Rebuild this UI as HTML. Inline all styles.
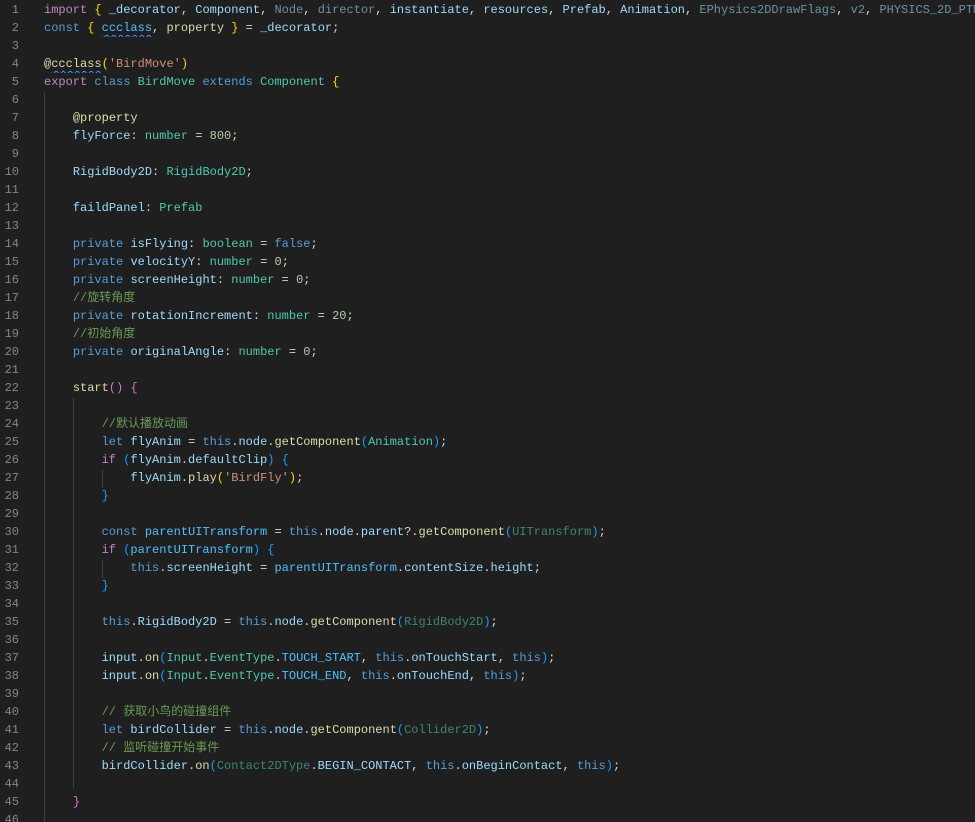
<!DOCTYPE html>
<html><head><meta charset="utf-8"><style>
html,body{margin:0;padding:0;background:#1f1f1f;width:975px;height:822px;overflow:hidden}
.ed{position:relative;width:975px;height:822px;overflow:hidden;font-family:"Liberation Mono","Noto Sans CJK SC",monospace;font-size:12px;line-height:18px;color:#d4d4d4;padding-top:1px;box-sizing:border-box}
.l{position:relative;height:18px;white-space:pre;overflow:hidden}
.n{position:absolute;left:0;width:19px;text-align:right;color:#858585}
.c{position:absolute;left:44px}
.g{position:absolute;width:1px;background:#404040}
.k{color:#c586c0}.b{color:#569cd6}.v{color:#9cdcfe}.t{color:#4ec9b0}.f{color:#dcdcaa}.s{color:#ce9178}.num{color:#b5cea8}.cm{color:#6a9955}.cn{color:#4fc1ff}
.y{color:#ffd700}.p{color:#da70d6}.bl{color:#179fff}.d{opacity:.6}
.sq{text-decoration:underline wavy #3794ff;text-decoration-thickness:1px;text-underline-offset:3px}
</style></head><body><div class="ed">
<div class="g" style="left:44px;top:92px;height:730px"></div>
<div class="g" style="left:73px;top:398px;height:390px"></div>
<div class="g" style="left:102px;top:470px;height:18px"></div>
<div class="g" style="left:102px;top:560px;height:18px"></div>
<div class="l"><span class="n">1</span><span class="c"><span class="k">import</span> <span class="y">{</span> <span class="v">_decorator</span>, <span class="v">Component</span>, <span class="v d">Node</span>, <span class="v d">director</span>, <span class="v">instantiate</span>, <span class="v">resources</span>, <span class="v">Prefab</span>, <span class="v">Animation</span>, <span class="v d">EPhysics2DDrawFlags</span>, <span class="v d">v2</span>, <span class="v d">PHYSICS_2D_PTM_RATIO</span></span></div>
<div class="l"><span class="n">2</span><span class="c"><span class="b">const</span> <span class="y">{</span> <span class="cn sq">ccclass</span>, <span class="f">property</span> <span class="y">}</span> = <span class="v">_decorator</span>;</span></div>
<div class="l"><span class="n">3</span></div>
<div class="l"><span class="n">4</span><span class="c"><span class="f">@<span class="sq">ccclass</span></span><span class="y">(</span><span class="s">'BirdMove'</span><span class="y">)</span></span></div>
<div class="l"><span class="n">5</span><span class="c"><span class="k">export</span> <span class="b">class</span> <span class="t">BirdMove</span> <span class="b">extends</span> <span class="t">Component</span> <span class="y">{</span></span></div>
<div class="l"><span class="n">6</span></div>
<div class="l"><span class="n">7</span><span class="c">    <span class="f">@property</span></span></div>
<div class="l"><span class="n">8</span><span class="c">    <span class="v">flyForce</span>: <span class="t">number</span> = <span class="num">800</span>;</span></div>
<div class="l"><span class="n">9</span></div>
<div class="l"><span class="n">10</span><span class="c">    <span class="v">RigidBody2D</span>: <span class="t">RigidBody2D</span>;</span></div>
<div class="l"><span class="n">11</span></div>
<div class="l"><span class="n">12</span><span class="c">    <span class="v">faildPanel</span>: <span class="t">Prefab</span></span></div>
<div class="l"><span class="n">13</span></div>
<div class="l"><span class="n">14</span><span class="c">    <span class="b">private</span> <span class="v">isFlying</span>: <span class="t">boolean</span> = <span class="b">false</span>;</span></div>
<div class="l"><span class="n">15</span><span class="c">    <span class="b">private</span> <span class="v">velocityY</span>: <span class="t">number</span> = <span class="num">0</span>;</span></div>
<div class="l"><span class="n">16</span><span class="c">    <span class="b">private</span> <span class="v">screenHeight</span>: <span class="t">number</span> = <span class="num">0</span>;</span></div>
<div class="l"><span class="n">17</span><span class="c">    <span class="cm">//旋转角度</span></span></div>
<div class="l"><span class="n">18</span><span class="c">    <span class="b">private</span> <span class="v">rotationIncrement</span>: <span class="t">number</span> = <span class="num">20</span>;</span></div>
<div class="l"><span class="n">19</span><span class="c">    <span class="cm">//初始角度</span></span></div>
<div class="l"><span class="n">20</span><span class="c">    <span class="b">private</span> <span class="v">originalAngle</span>: <span class="t">number</span> = <span class="num">0</span>;</span></div>
<div class="l"><span class="n">21</span></div>
<div class="l"><span class="n">22</span><span class="c">    <span class="f">start</span><span class="p">()</span> <span class="p">{</span></span></div>
<div class="l"><span class="n">23</span></div>
<div class="l"><span class="n">24</span><span class="c">        <span class="cm">//默认播放动画</span></span></div>
<div class="l"><span class="n">25</span><span class="c">        <span class="b">let</span> <span class="v">flyAnim</span> = <span class="b">this</span>.<span class="v">node</span>.<span class="f">getComponent</span><span class="bl">(</span><span class="t">Animation</span><span class="bl">)</span>;</span></div>
<div class="l"><span class="n">26</span><span class="c">        <span class="k">if</span> <span class="bl">(</span><span class="v">flyAnim</span>.<span class="v">defaultClip</span><span class="bl">)</span> <span class="bl">{</span></span></div>
<div class="l"><span class="n">27</span><span class="c">            <span class="v">flyAnim</span>.<span class="f">play</span><span class="y">(</span><span class="s">'BirdFly'</span><span class="y">)</span>;</span></div>
<div class="l"><span class="n">28</span><span class="c">        <span class="bl">}</span></span></div>
<div class="l"><span class="n">29</span></div>
<div class="l"><span class="n">30</span><span class="c">        <span class="b">const</span> <span class="cn">parentUITransform</span> = <span class="b">this</span>.<span class="v">node</span>.<span class="v">parent</span>?.<span class="f">getComponent</span><span class="bl">(</span><span class="t d">UITransform</span><span class="bl">)</span>;</span></div>
<div class="l"><span class="n">31</span><span class="c">        <span class="k">if</span> <span class="bl">(</span><span class="cn">parentUITransform</span><span class="bl">)</span> <span class="bl">{</span></span></div>
<div class="l"><span class="n">32</span><span class="c">            <span class="b">this</span>.<span class="v">screenHeight</span> = <span class="cn">parentUITransform</span>.<span class="v">contentSize</span>.<span class="v">height</span>;</span></div>
<div class="l"><span class="n">33</span><span class="c">        <span class="bl">}</span></span></div>
<div class="l"><span class="n">34</span></div>
<div class="l"><span class="n">35</span><span class="c">        <span class="b">this</span>.<span class="v">RigidBody2D</span> = <span class="b">this</span>.<span class="v">node</span>.<span class="f">getComponent</span><span class="bl">(</span><span class="t d">RigidBody2D</span><span class="bl">)</span>;</span></div>
<div class="l"><span class="n">36</span></div>
<div class="l"><span class="n">37</span><span class="c">        <span class="v">input</span>.<span class="f">on</span><span class="bl">(</span><span class="t">Input</span>.<span class="t">EventType</span>.<span class="cn">TOUCH_START</span>, <span class="b">this</span>.<span class="v">onTouchStart</span>, <span class="b">this</span><span class="bl">)</span>;</span></div>
<div class="l"><span class="n">38</span><span class="c">        <span class="v">input</span>.<span class="f">on</span><span class="bl">(</span><span class="t">Input</span>.<span class="t">EventType</span>.<span class="cn">TOUCH_END</span>, <span class="b">this</span>.<span class="v">onTouchEnd</span>, <span class="b">this</span><span class="bl">)</span>;</span></div>
<div class="l"><span class="n">39</span></div>
<div class="l"><span class="n">40</span><span class="c">        <span class="cm">// 获取小鸟的碰撞组件</span></span></div>
<div class="l"><span class="n">41</span><span class="c">        <span class="b">let</span> <span class="v">birdCollider</span> = <span class="b">this</span>.<span class="v">node</span>.<span class="f">getComponent</span><span class="bl">(</span><span class="t d">Collider2D</span><span class="bl">)</span>;</span></div>
<div class="l"><span class="n">42</span><span class="c">        <span class="cm">// 监听碰撞开始事件</span></span></div>
<div class="l"><span class="n">43</span><span class="c">        <span class="v">birdCollider</span>.<span class="f">on</span><span class="bl">(</span><span class="t d">Contact2DType</span>.<span class="v">BEGIN_CONTACT</span>, <span class="b">this</span>.<span class="v">onBeginContact</span>, <span class="b">this</span><span class="bl">)</span>;</span></div>
<div class="l"><span class="n">44</span></div>
<div class="l"><span class="n">45</span><span class="c">    <span class="p">}</span></span></div>
<div class="l"><span class="n">46</span></div>
</div></body></html>
